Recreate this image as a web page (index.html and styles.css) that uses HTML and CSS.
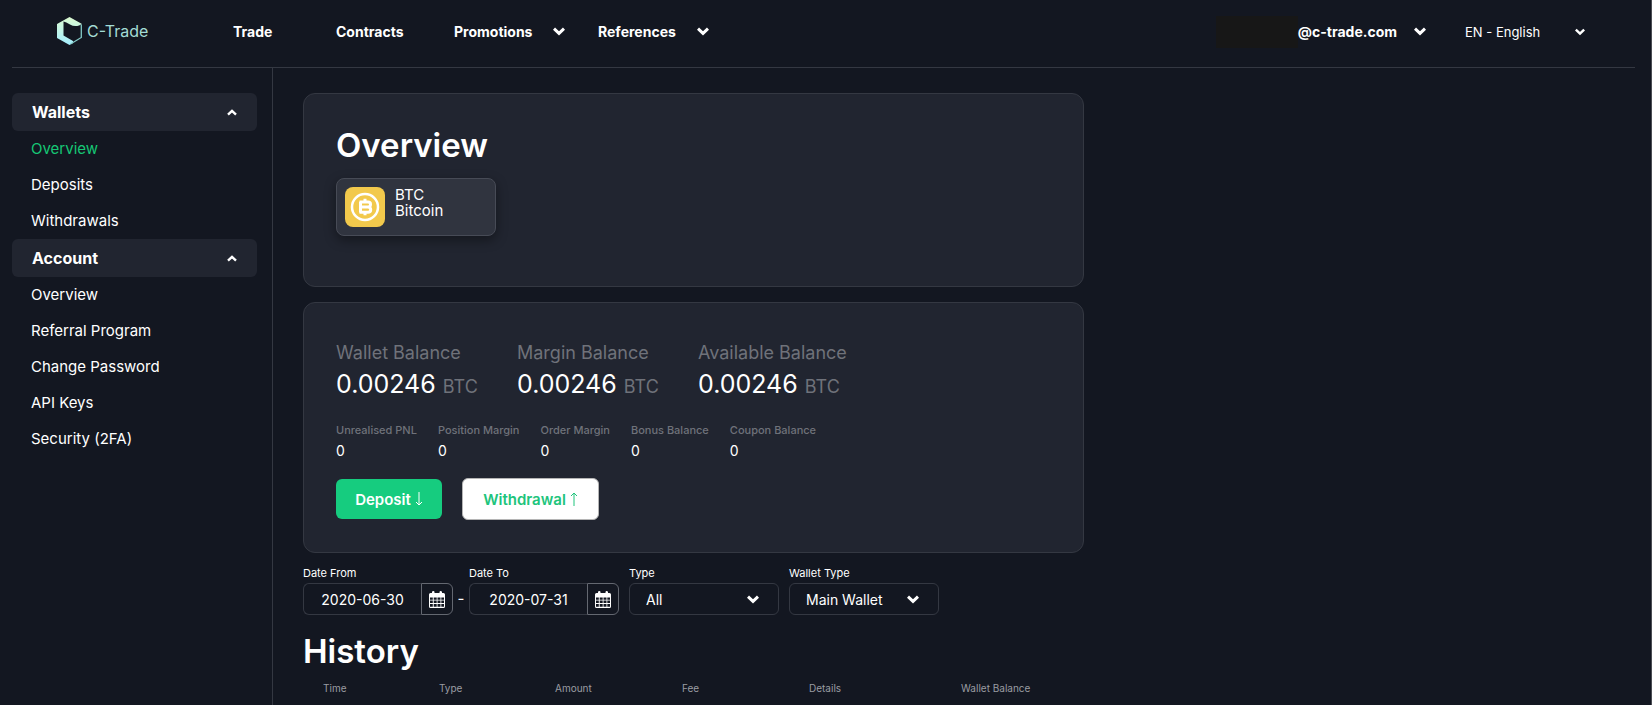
FILE: index.html
```html
<!DOCTYPE html>
<html lang="en">
<head>
<meta charset="utf-8">
<meta name="viewport" content="width=device-width, initial-scale=1">
<title>C-Trade</title>
<link rel="stylesheet" href="styles.css">
</head>
<body>
<svg class="defs" aria-hidden="true">
  <symbol id="chevron" viewBox="0 0 12 9"><path d="M1 1.6 6 6.4 11 1.6" fill="none" stroke="currentColor" stroke-width="3"/></symbol>
  <symbol id="chevron-up" viewBox="0 0 10 7"><path d="M1 5.6 5 1.8 9 5.6" fill="none" stroke="currentColor" stroke-width="2.4"/></symbol>
  <symbol id="calendar" viewBox="0 0 16 17"><path fill="currentColor" fill-rule="evenodd" d="M1.5 2H3V1.2Q3 0 4.3 0T5.5 1.2V2h5V1.2Q10.500 0 11.700 0T13 1.200V2h1.500Q16 2 16 3.500v12q0 1.500-1.500 1.500h-13Q0 17 0 15.500v-12Q0 2 1.500 2ZM1 6.500v2.300h2.800V6.500Zm3.700 0v2.300h3V6.500Zm3.800 0v2.300h3V6.500Zm3.800 0v2.300H15V6.500ZM1 9.600v2.500h2.800V9.600Zm3.700 0v2.500h3V9.600Zm3.800 0v2.500h3V9.600Zm3.800 0v2.500H15V9.600ZM1 13v2.800h2.800V13Zm3.700 0v2.800h3V13Zm3.800 0v2.800h3V13Zm3.800 0v2.800H15V13Z"/></symbol>
</svg>
<div class="page">
  <header class="topbar">
    <a class="logo" href="#">
      <svg width="25" height="28" viewBox="0 0 25 28" aria-hidden="true">
        <defs><linearGradient id="lg" x1="0" y1="0" x2="0" y2="1"><stop offset="0" stop-color="#dcfad0"/><stop offset="1" stop-color="#a4eeff"/></linearGradient></defs>
        <path fill="url(#lg)" d="M12.500 0 25 7 22 8.600Q17 10 13 7.500T6.500 4.500V18.500L16 24V26L12.500 28 0 21V7Z"/>
        <path d="M24.300 7.500v13L13.500 27" fill="none" stroke="#83c9c6" stroke-width="1.300"/>
      </svg>
      <span>C-Trade</span>
    </a>
    <nav class="mainnav">
      <a class="nav-trade" href="#">Trade</a>
      <a class="nav-contracts" href="#">Contracts</a>
      <button class="nav-menu" type="button">Promotions<svg class="chev"><use href="#chevron"/></svg></button>
      <button class="nav-menu" type="button">References<svg class="chev"><use href="#chevron"/></svg></button>
    </nav>
    <div class="account">
      <button class="nav-menu user" type="button"><span class="email"><span class="redacted"></span>@c-trade.com</span><svg class="chev"><use href="#chevron"/></svg></button>
      <div class="select-wrap lang">
        <select aria-label="Language"><option>EN - English</option></select>
        <svg class="chev"><use href="#chevron"/></svg>
      </div>
    </div>
  </header>
  <div class="body">
    <aside class="sidebar">
      <button class="group" type="button">Wallets<svg class="chev-up"><use href="#chevron-up"/></svg></button>
      <a class="item active" href="#">Overview</a>
      <a class="item" href="#">Deposits</a>
      <a class="item" href="#">Withdrawals</a>
      <button class="group" type="button">Account<svg class="chev-up"><use href="#chevron-up"/></svg></button>
      <a class="item" href="#">Overview</a>
      <a class="item" href="#">Referral Program</a>
      <a class="item" href="#">Change Password</a>
      <a class="item" href="#">API Keys</a>
      <a class="item" href="#">Security (2FA)</a>
    </aside>
    <main class="content">
      <section class="card overview">
        <h1>Overview</h1>
        <button class="coin" type="button">
          <svg width="40" height="40" viewBox="0 0 40 40" aria-hidden="true">
            <rect width="40" height="40" rx="8" fill="#f2c94c"/>
            <circle cx="20" cy="20" r="13" fill="none" stroke="#fff" stroke-width="2.500"/>
            <path d="M15.500 14.800V25.500M14.500 15h8.500q2.500 0 2.500 2.200 0 2.400-2 2.800 2.200.5 2.200 2.800 0 2.400-2.700 2.400H14.500M16 20h8M20 11.800V15M20 25v3.200" fill="none" stroke="#fff" stroke-width="3"/>
          </svg>
          <span>BTC<br>Bitcoin</span>
        </button>
      </section>
      <section class="card balances">
        <dl class="totals">
          <div><dt>Wallet Balance</dt><dd>0.00246 <small>BTC</small></dd></div>
          <div><dt>Margin Balance</dt><dd>0.00246 <small>BTC</small></dd></div>
          <div><dt>Available Balance</dt><dd>0.00246 <small>BTC</small></dd></div>
        </dl>
        <dl class="details">
          <div><dt>Unrealised PNL</dt><dd>0</dd></div>
          <div><dt>Position Margin</dt><dd>0</dd></div>
          <div><dt>Order Margin</dt><dd>0</dd></div>
          <div><dt>Bonus Balance</dt><dd>0</dd></div>
          <div><dt>Coupon Balance</dt><dd>0</dd></div>
        </dl>
        <div class="actions">
          <button class="btn primary" type="button">Deposit <svg class="arrow" viewBox="0 0 8 14"><path d="M4 0v13M1 10l3 3 3-3"/></svg></button>
          <button class="btn secondary" type="button">Withdrawal <svg class="arrow" viewBox="0 0 8 14"><path d="M4 14V1M1 4l3-3 3 3"/></svg></button>
        </div>
      </section>
      <form class="filters">
        <div class="field">
          <label for="from">Date From</label>
          <div class="date"><input id="from" type="text" value="2020-06-30"><button type="button" aria-label="Pick start date"><svg><use href="#calendar"/></svg></button></div>
        </div>
        <span class="dash">-</span>
        <div class="field">
          <label for="to">Date To</label>
          <div class="date"><input id="to" type="text" value="2020-07-31"><button type="button" aria-label="Pick end date"><svg><use href="#calendar"/></svg></button></div>
        </div>
        <div class="field spaced">
          <label for="type">Type</label>
          <div class="select-wrap boxed"><select id="type"><option>All</option></select><svg class="chev"><use href="#chevron"/></svg></div>
        </div>
        <div class="field spaced">
          <label for="wallet">Wallet Type</label>
          <div class="select-wrap boxed"><select id="wallet"><option>Main Wallet</option></select><svg class="chev"><use href="#chevron"/></svg></div>
        </div>
      </form>
      <h2>History</h2>
      <table class="history">
        <colgroup><col class="c-s"><col class="c-s"><col class="c-m"><col class="c-m"><col class="c-l"><col></colgroup>
        <thead><tr><th>Time</th><th>Type</th><th>Amount</th><th>Fee</th><th>Details</th><th>Wallet Balance</th></tr></thead>
      </table>
    </main>
  </div>
</div>
</body>
</html>
```
FILE: styles.css
```css
* { box-sizing: border-box; }
body { margin: 0; background: #131721; color: #fff; font-family: Inter, "Liberation Sans", sans-serif; font-size: 15px; }
a { color: inherit; text-decoration: none; }
button { font: inherit; color: inherit; background: none; border: 0; padding: 0; cursor: pointer; }
dl, dd, h1, h2 { margin: 0; }
.defs { position: absolute; width: 0; height: 0; }
.page { min-height: 100vh; padding: 0 16px 0 12px; border-right: 1px solid #4b4d54; display: flex; flex-direction: column; }

.topbar { display: flex; align-items: center; height: 68px; padding: 0 50px 4px 45px; border-bottom: 1px solid #343842; }
.logo { display: flex; align-items: center; gap: 5px; width: 176px; padding-bottom: 2px; color: #a3dcd5; font-size: 16px; }
.mainnav { display: flex; align-items: center; font-size: 14px; font-weight: 700; flex: 1; }
.nav-trade { width: 103px; }
.nav-contracts { width: 118px; }
.mainnav .nav-menu { width: 144px; gap: 21px; }
.nav-menu { display: flex; align-items: center; gap: 17px; font-size: 14px; font-weight: 700; }
.chev { width: 12px; height: 9px; flex: none; }
.account { display: flex; align-items: center; }
.email { display: flex; align-items: center; }
.redacted { width: 82px; height: 32px; background: #171717; }
.select-wrap { display: grid; align-items: center; }
.select-wrap > * { grid-area: 1 / 1; }
.select-wrap .chev { justify-self: end; pointer-events: none; }
select { appearance: none; background: none; border: 0; color: inherit; font: inherit; padding: 0; width: 100%; }
select option { background: #131721; }
.lang { width: 120px; margin-left: 39px; font-size: 13px; }
.lang .chev { width: 10px; height: 8px; }

.body { display: flex; flex: 1; }
.sidebar { width: 261px; flex: none; padding: 25px 15px 0 0; border-right: 1px solid #343842; }
.group { display: flex; align-items: center; justify-content: space-between; width: 100%; height: 38px; padding: 0 20px; border-radius: 6px; background: #212530; font-size: 16px; font-weight: 700; }
.chev-up { width: 10px; height: 7px; }
.item { display: block; line-height: 36px; padding-left: 19px; }
.active { color: #16c775; }

.content { flex: 1; padding: 25px 0 0 30px; }
.card { max-width: 781px; border: 1px solid #343842; border-radius: 12px; background: #212530; padding: 32px; margin-bottom: 15px; }
h1, h2 { font-size: 33px; line-height: 40px; font-weight: 600; }
.overview { min-height: 194px; padding-top: 31px; }
.coin { display: flex; gap: 10px; width: 160px; height: 58px; margin-top: 13px; padding: 8px; text-align: left; line-height: 16px; background: #30343f; border: 1px solid #474b56; border-radius: 8px; box-shadow: 0 4px 12px #0006; }
.balances { padding-top: 37px; padding-bottom: 32px; margin-bottom: 12px; }
.totals { display: flex; gap: 39px; color: #6f727a; font-size: 18px; }
.totals div { flex: 0 0 142px; white-space: nowrap; }
.totals dt { line-height: 26px; }
.totals dd { color: #fff; font-size: 25px; line-height: 36px; }
.totals small { font-size: 18px; color: #6f727a; }
.details { display: flex; gap: 21px; margin-top: 15px; color: #6f727a; font-size: 11px; font-weight: 500; }
.details dt { line-height: 20px; }
.details dd { color: #fff; font-size: 14px; line-height: 22px; font-weight: 400; }
.actions { display: flex; align-items: center; gap: 20px; margin-top: 16px; }
.btn { display: flex; align-items: center; justify-content: center; gap: 4px; font-weight: 600; border-radius: 6px; }
.primary { width: 106px; height: 40px; background: #16cc7f; }
.secondary { width: 137px; height: 42px; background: #fff; color: #20c47c; border: 1px solid #b5b5b5; }
.arrow { width: 8px; height: 14px; fill: none; stroke: currentColor; }

.filters { display: flex; align-items: flex-end; }
.field label { display: block; font-size: 11px; line-height: 16px; margin-bottom: 2px; }
.date { display: flex; width: 150px; height: 32px; }
.date input { flex: 1; min-width: 0; background: none; border: 1px solid #343842; border-right: 0; border-radius: 6px 0 0 6px; color: inherit; font: inherit; font-size: 14px; text-align: center; padding: 0; }
.date button { display: grid; place-items: center; width: 32px; border: 1px solid #646871; border-radius: 0 6px 6px 0; }
.date svg { width: 16px; height: 17px; }
.dash { width: 16px; text-align: center; line-height: 32px; }
.spaced { margin-left: 10px; }
.boxed { width: 150px; height: 32px; border: 1px solid #343842; border-radius: 6px; padding: 0 19px 0 16px; font-size: 14px; }
h2 { margin-top: 16px; }
.history { width: 100%; max-width: 782px; table-layout: fixed; border-collapse: collapse; margin-top: 9px; font-size: 10px; color: #9a9ca1; }
.history th { text-align: left; font-weight: 400; line-height: 16px; padding: 0 0 0 20px; white-space: nowrap; }
.c-s { width: 116px; }
.c-m { width: 127px; }
.c-l { width: 152px; }
```
